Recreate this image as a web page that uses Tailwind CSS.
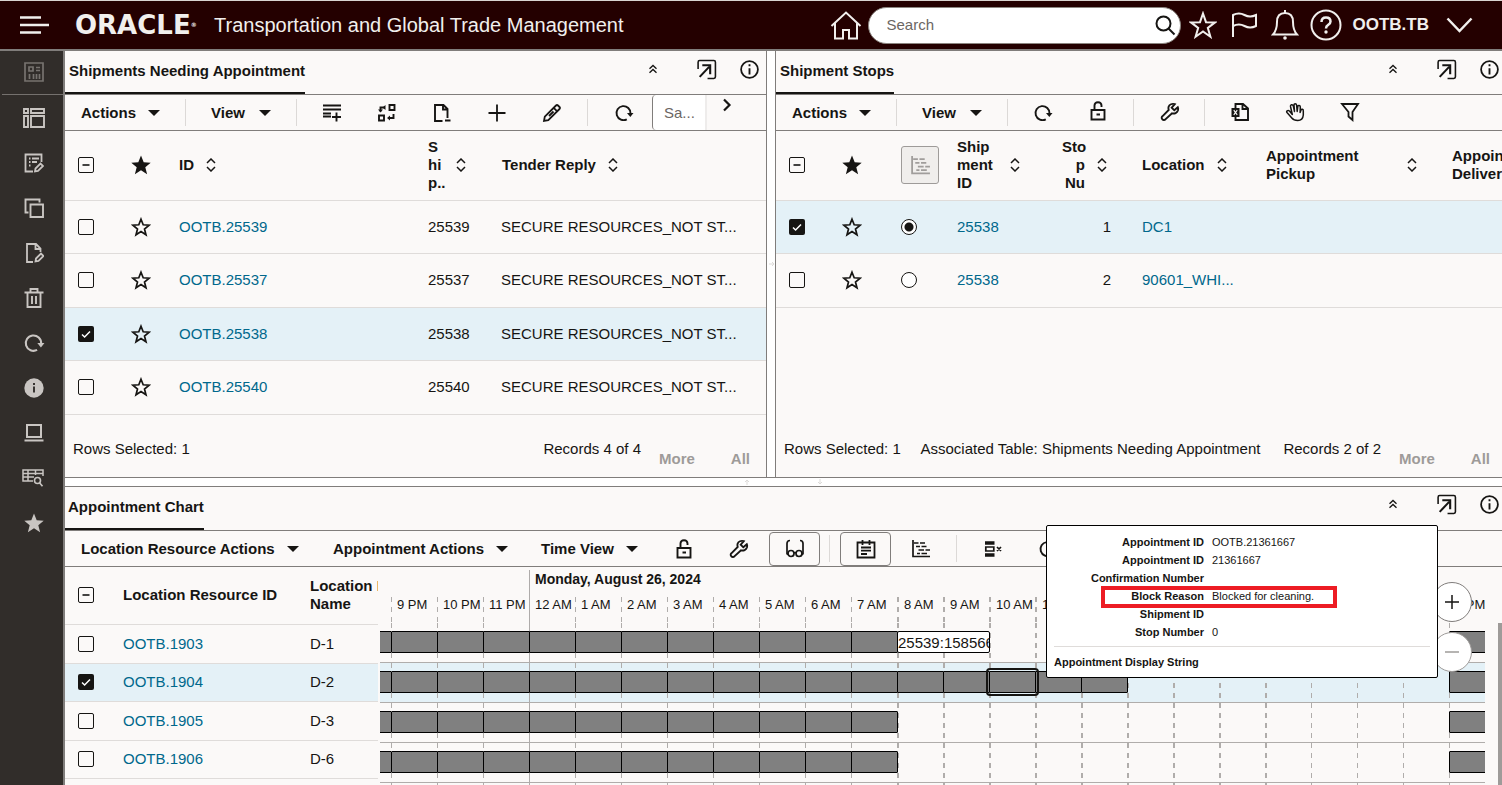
<!DOCTYPE html>
<html lang="en">
<head>
  <meta charset="UTF-8" />
  <meta name="viewport" content="width=device-width, initial-scale=1.0" />
  <title>Transportation and Global Trade Management</title>
  <script src="https://cdn.jsdelivr.net/npm/@tailwindcss/browser@4"></script>
</head>
<body class="h-screen overflow-hidden flex flex-col bg-white text-[#161513] text-[15px] leading-[18px] font-['Liberation_Sans',Arial,sans-serif]">

  <!-- Icon sprite -->
  <svg class="hidden" xmlns="http://www.w3.org/2000/svg">
    <symbol id="caret" viewBox="0 0 12 6"><path d="M0 0h12L6 6z" fill="currentColor"/></symbol>
    <symbol id="sort" viewBox="0 0 10 14"><path d="M1 5l4-4 4 4M1 9l4 4 4-4" fill="none" stroke="currentColor" stroke-width="1.5"/></symbol>
    <symbol id="star" viewBox="0 0 20 20"><path d="M10 2.200l2.200 5.600 5.900.4-4.600 3.800 1.500 5.800-5-3.200-5 3.200 1.500-5.800-4.600-3.800 5.900-.4z" fill="none" stroke="currentColor" stroke-width="1.700"/></symbol>
    <symbol id="star-fill" viewBox="0 0 20 20"><path d="M10 .5l2.7 6.7 7 .5-5.4 4.500 1.800 7-6.100-3.900-6.100 3.900 1.800-7L.3 7.700l7-.5z" fill="currentColor"/></symbol>
    <symbol id="tick" viewBox="0 0 14 14"><path d="M3 7.5l2.6 2.5L11 4.5" fill="none" stroke="#fff" stroke-width="1.5"/></symbol>
    <symbol id="dash" viewBox="0 0 14 14"><path d="M3.5 7h7" fill="none" stroke="#161513" stroke-width="1.6"/></symbol>
    <symbol id="collapse" viewBox="0 0 10 10"><path d="M1.5 4.8L5 1.5l3.5 3.3M1.5 8.8L5 5.5l3.5 3.3" fill="none" stroke="currentColor" stroke-width="1.3"/></symbol>
    <symbol id="popout" viewBox="0 0 20 20"><g fill="none" stroke="currentColor"><path d="M2 9.500V3q0-1.500 1.500-1.500h13.500q1.500 0 1.500 1.500v14q0 1.500-1.500 1.500H11" stroke-width="1.500"/><path d="M3.500 17L12.500 7.500M6 6h7.500v8.500" stroke-width="2"/></g></symbol>
    <symbol id="info" viewBox="0 0 20 20"><circle cx="10" cy="10" r="8" fill="none" stroke="currentColor" stroke-width="1.700"/><path d="M10 8.700v6M10 5v2" stroke="currentColor" stroke-width="1.800"/></symbol>
    <symbol id="rows-add" viewBox="0 0 20 20"><path d="M1 2.500h18M1 6.500h18M1 10.500h8M1 13.500h8M14.500 9.500v9M10 14h9" fill="none" stroke="currentColor" stroke-width="1.900"/></symbol>
    <symbol id="swap" viewBox="0 0 20 20"><g fill="none" stroke="currentColor" stroke-width="1.900"><path d="M12.500 2h5v5h-5zM2 12.500h5v5H2zM3.500 8.500V4.500h4M16.500 11v4h-4"/><path d="M1 6.500h5L3.500 9.500zM8.500 2v5L5.500 4.500zM13 12.500v5L10 15z" fill="currentColor" stroke="none"/></g></symbol>
    <symbol id="doc-minus" viewBox="0 0 20 20"><path d="M10.500 18H3V2h8.500l4 4v9M11 2v4.500h4.500M13 17.500h5.500" fill="none" stroke="currentColor" stroke-width="1.900"/></symbol>
    <symbol id="plus" viewBox="0 0 20 20"><path d="M10 1.500v17M1.500 10h17" fill="none" stroke="currentColor" stroke-width="1.800"/></symbol>
    <symbol id="pencil" viewBox="0 0 20 20"><path d="M2 18l.8-4.300L14 2.500q1-1 2 0L17.500 4q1 1 0 2L6.300 17.200zM11.700 4.800l3.500 3.500M7 13l4.500-4.500" fill="none" stroke="currentColor" stroke-width="1.800"/></symbol>
    <symbol id="refresh" viewBox="0 0 20 20"><path d="M12.800 16.300A7 7 0 1 1 16.500 10.500" fill="none" stroke="currentColor" stroke-width="1.900"/><path d="M13 10h6.500L16.300 14z" fill="currentColor"/></symbol>
    <symbol id="lock" viewBox="0 0 20 20"><path d="M3.500 9h13v9.500h-13zM6.500 9V4.500q0-3.200 3.500-3.200t3.500 3.200V6M8.500 13.500h3.500" fill="none" stroke="currentColor" stroke-width="1.900"/></symbol>
    <symbol id="wrench" viewBox="0 0 20 20"><path d="M17.800 5.200l-3.500 3.100-2.600-2.600 3.100-3.500c-2.500-1-5.500.2-6.300 2.800-.3 1 0 2.200.2 3L2.400 14.300a1.900 1.900 0 0 0 0 3 1.900 1.900 0 0 0 3 0L12 11.300c2.500.8 5.200-.5 6-3 .3-1.100.2-2.200-.2-3.100z" fill="none" stroke="currentColor" stroke-width="1.900"/></symbol>
    <symbol id="excel" viewBox="0 0 20 20"><path d="M5.500 6V2H13l5 4.500V18H5.500v-3M12.500 2v5h5" fill="none" stroke="currentColor" stroke-width="1.900"/><path d="M1.500 6h8v9h-8z" fill="currentColor"/><path d="M3.800 8.200l3.400 4.600M7.200 8.200l-3.400 4.600" stroke="#fbf9f8" stroke-width="1.100"/></symbol>
    <symbol id="hand" viewBox="0 0 20 20"><path d="M7.300 12.500L5.500 4.500Q5.200 3 6.500 2.700T8.300 3.800L9.500 9.500L9 3q0-1.300 1.200-1.300T11.600 3l.6 6.500L12.800 4.500q.2-1.200 1.400-1T15.300 5l-.2 5.500L16 8q.4-1 1.400-.7T18.300 9v4q-.5 5.500-5.500 5.500-4 0-6-2.500L2 10.500q-.8-1 .2-1.700T4.500 9z" fill="none" stroke="currentColor" stroke-width="1.500" stroke-linejoin="round"/></symbol>
    <symbol id="filter" viewBox="0 0 20 20"><path d="M2 2h16l-5.500 8v8l-4-3.500V10z" fill="none" stroke="currentColor" stroke-width="1.800"/></symbol>
    <symbol id="gantt" viewBox="0 0 20 20"><path d="M2 1v16.500h17M3 4h4.500M9 4h5M5 7.500h4M10.500 7.500h5M7.500 11H13M14.500 11H19M6 14.500h3M10.500 14.500h5.500" fill="none" stroke="currentColor" stroke-width="1.700"/></symbol>
    <symbol id="glasses" viewBox="0 0 20 20"><g fill="none" stroke="currentColor" stroke-width="1.700"><circle cx="6" cy="14.500" r="3"/><circle cx="14" cy="14.500" r="3"/><path d="M9 14q1-.8 2 0M2 15.500V4.500q0-3 3-3M18 15.500V4.500q0-3-3-3M2 15.500l1.500-1M18 15.500l-1.500-1"/></g></symbol>
    <symbol id="notes" viewBox="0 0 20 20"><path d="M1.500 3.500h17v15h-17zM6.500 1v5M13.500 1v5M5 8.500h10M5 11.700h10M5 15h6" fill="none" stroke="currentColor" stroke-width="1.800"/></symbol>
    <symbol id="block-x" viewBox="0 0 20 20"><path d="M2 4h9.500M2 16h9.500" stroke="currentColor" stroke-width="3.500"/><path d="M2.800 8h8v4h-8zM14 8l4 4M18 8l-4 4" fill="none" stroke="currentColor" stroke-width="1.700"/></symbol>
    <symbol id="dashboard" viewBox="0 0 20 20"><path d="M1 1h18v18H1zM5 5h4v4H5zM12 5.500h4M12 8.500h4M5.500 12v5M9.500 12v5M12.500 12v5M15.500 12v5" fill="none" stroke="currentColor" stroke-width="1.700"/></symbol>
    <symbol id="layout" viewBox="0 0 22 20"><path d="M1 1h4v4H1zM8 1h13v4H8zM1 8h4v11H1zM8 8h13v11H8z" fill="none" stroke="currentColor" stroke-width="1.900"/></symbol>
    <symbol id="form-edit" viewBox="0 0 20 20"><path d="M9 18.500H1.500v-17h16V9M5 5.500h1.500M8 5.500h7M5 9h1.500M8 9h5M5 12.500h1.500M11 18.500l.5-3 5-5 2.500 2.500-5 5z" fill="none" stroke="currentColor" stroke-width="1.800"/></symbol>
    <symbol id="copy" viewBox="0 0 20 20"><path d="M6.500 6.500h12.500v12.500H6.500zM4.500 14.500H1.500v-13h14v3" fill="none" stroke="currentColor" stroke-width="1.900"/></symbol>
    <symbol id="doc-edit" viewBox="0 0 20 20"><path d="M9 19H3V1h9l4.500 4.500V9M11.500 1v5h5M11.500 18.500l.5-3 5-5 2.500 2.500-5 5z" fill="none" stroke="currentColor" stroke-width="1.800"/></symbol>
    <symbol id="trash" viewBox="0 0 20 20"><path d="M.5 4.500h19M3.500 4.500v14.500h13V4.500M6.500 4.500V1h7v3.500M8 8v8M12 8v8" fill="none" stroke="currentColor" stroke-width="1.900"/></symbol>
    <symbol id="info-fill" viewBox="0 0 20 20"><circle cx="10" cy="10" r="9.700" fill="currentColor"/><path d="M10 8.500v6M10 5v2" stroke="#312d2a" stroke-width="1.900"/></symbol>
    <symbol id="laptop" viewBox="0 0 20 20"><path d="M3 2h14v12H3zM.5 17.500h19" fill="none" stroke="currentColor" stroke-width="2"/></symbol>
    <symbol id="table-search" viewBox="0 0 22 20"><path d="M11 13H1V2h20v6M1 5.500h20M1 9h11M6 2v11M13.500 2v5" fill="none" stroke="currentColor" stroke-width="1.500"/><circle cx="15.500" cy="12.500" r="3" fill="none" stroke="currentColor" stroke-width="1.600"/><path d="M17.500 14.700l3 3.500" stroke="currentColor" stroke-width="1.700"/></symbol>
  </svg>

  <!-- Top bar -->
  <header class="h-[51px] shrink-0 flex items-center bg-[#240000] text-[#f1efed] border-t border-t-[#d9d4d1] border-b-2 border-b-[#807d7b] pl-5 pr-[29px]">
    <button type="button" aria-label="Menu" class="w-[55px]">
      <svg class="w-[29px] h-[18px]" viewBox="0 0 29 18"><path d="M0 1.500h21M0 9h29M0 16.500h21" stroke="currentColor" stroke-width="2.500"/></svg>
    </button>
    <a href="#" class="w-[139px] font-['DejaVu_Sans',sans-serif] font-bold text-[26px]">ORACLE<span class="text-[6px] align-top">®</span></a>
    <h1 class="text-[20px] whitespace-nowrap">Transportation and Global Trade Management</h1>
    <nav class="ml-auto flex items-center">
      <button type="button" aria-label="Home"><svg class="w-[32px] h-[30px]" viewBox="0 0 32 30" fill="none" stroke="currentColor" stroke-width="2"><path d="M1.500 16L16 2.500 30.500 16M5 13v15.500h8V20h6v8.500h8V13"/></svg></button>
      <div class="ml-[6px] flex items-center w-[313px] h-[37px] rounded-full bg-white border border-[#8b8580] pl-[18px] pr-[4px] text-[#161513]">
        <input type="search" placeholder="Search" aria-label="Search" class="flex-1 min-w-0 bg-transparent outline-none placeholder:text-[#6b6663]">
        <button type="button" aria-label="Run search"><svg class="size-[22px]" viewBox="0 0 22 22" fill="none" stroke="currentColor" stroke-width="2"><circle cx="9.500" cy="9.500" r="7"/><path d="M14.500 14.500l6 6"/></svg></button>
      </div>
      <button type="button" aria-label="Favorites" class="ml-[8px]"><svg class="size-[28px]" viewBox="0 0 28 28" fill="none" stroke="currentColor" stroke-width="2"><path d="M14 2.500l3 8.700 9 .2-7.200 5.500 2.600 8.800-7.400-5.200-7.400 5.200 2.600-8.800L2 11.400l9-.2z"/></svg></button>
      <button type="button" aria-label="Flag" class="ml-[14px]"><svg class="w-[27px] h-[26px]" viewBox="0 0 27 26" fill="none" stroke="currentColor" stroke-width="2"><path d="M2 25V3q6-3 11.500 0T25 3v11q-6 3-11.500 0T2 14"/></svg></button>
      <button type="button" aria-label="Notifications" class="ml-[13px]"><svg class="w-[28px] h-[32px]" viewBox="0 0 28 32" fill="none" stroke="currentColor" stroke-width="2"><path d="M14 1v3M14 4q-8 0-8 9 0 8-4 12.500h24Q22 21 22 13q0-9-8-9z"/><circle cx="14" cy="29" r="1.800" fill="currentColor" stroke="none"/></svg></button>
      <button type="button" aria-label="Help" class="ml-[11px]"><svg class="size-[32px]" viewBox="0 0 32 32" fill="none" stroke="currentColor" stroke-width="2"><circle cx="16" cy="16" r="14.500"/><path d="M11.500 13q0-4.500 4.500-4.500t4.500 4q0 2-2.300 3.300Q16 17 16 19.500" stroke-width="2.500"/><circle cx="16" cy="23" r="1.700" fill="currentColor" stroke="none"/></svg></button>
      <button type="button" class="ml-[11px] flex items-center gap-[17px] font-bold text-[17px]">OOTB.TB
        <svg class="w-[27px] h-[16px]" viewBox="0 0 27 16" fill="none" stroke="currentColor" stroke-width="2.500"><path d="M1.500 1.500l12 12.500 12-12.500"/></svg>
      </button>
    </nav>
  </header>

  <div class="flex-1 min-h-0 flex">
    <!-- Side rail -->
    <aside class="w-[65px] shrink-0 flex flex-col bg-[#312d2a] text-[#c9c5c2] border-r-2 border-[#807d7b]">
      <button type="button" aria-label="Dashboard" class="h-[44px] ml-[2px] pl-[3px] pb-[2px] grid place-items-center border-b border-[#75716e] text-[#77736f]"><svg class="size-[20px]"><use href="#dashboard"/></svg></button>
      <button type="button" aria-label="Layout" class="h-[45px] pl-[5px] grid place-items-center"><svg class="w-[22px] h-[20px]"><use href="#layout"/></svg></button>
      <button type="button" aria-label="Edit form" class="h-[45px] pl-[5px] grid place-items-center"><svg class="size-[20px]"><use href="#form-edit"/></svg></button>
      <button type="button" aria-label="Copy" class="h-[45px] pl-[5px] grid place-items-center"><svg class="size-[20px]"><use href="#copy"/></svg></button>
      <button type="button" aria-label="Edit document" class="h-[45px] pl-[5px] grid place-items-center"><svg class="size-[20px]"><use href="#doc-edit"/></svg></button>
      <button type="button" aria-label="Delete" class="h-[45px] pl-[5px] grid place-items-center"><svg class="size-[20px]"><use href="#trash"/></svg></button>
      <button type="button" aria-label="Refresh" class="h-[45px] pl-[5px] grid place-items-center"><svg class="size-[22px]"><use href="#refresh"/></svg></button>
      <button type="button" aria-label="Information" class="h-[45px] pl-[5px] grid place-items-center"><svg class="size-[20px]"><use href="#info-fill"/></svg></button>
      <button type="button" aria-label="Screen" class="h-[45px] pl-[5px] grid place-items-center"><svg class="size-[20px]"><use href="#laptop"/></svg></button>
      <button type="button" aria-label="Search table" class="h-[45px] pl-[3px] grid place-items-center"><svg class="w-[22px] h-[20px]"><use href="#table-search"/></svg></button>
      <button type="button" aria-label="Favorites" class="h-[45px] pl-[5px] grid place-items-center"><svg class="size-[20px]"><use href="#star-fill"/></svg></button>
    </aside>

    <main class="flex-1 min-w-0 flex flex-col">
      <div class="h-[427px] shrink-0 flex border-b border-[#807d7b]">

        <!-- Shipments Needing Appointment -->
        <section class="flex-[702] min-w-0 flex flex-col overflow-hidden bg-[#fbf9f8] border-r border-[#807d7b]">
          <div class="h-[44px] shrink-0 flex items-stretch border-b border-[#807d7b]">
            <h2 class="pl-[4px] pb-[1px] flex items-center font-bold whitespace-nowrap border-b-2 border-[#161513]">Shipments Needing Appointment</h2>
            <div class="ml-auto flex items-center pb-[7px] pr-[6px]">
              <button type="button" aria-label="Collapse"><svg class="size-[10px]"><use href="#collapse"/></svg></button>
              <button type="button" aria-label="Open in window" class="ml-[38px]"><svg class="size-[21px]"><use href="#popout"/></svg></button>
              <button type="button" aria-label="Information" class="ml-[22px]"><svg class="size-[21px]"><use href="#info"/></svg></button>
            </div>
          </div>
          <div class="h-[36px] shrink-0 flex items-center border-b border-[#807d7b]">
            <button type="button" class="w-[120px] pl-4 flex items-center gap-[12px] font-bold">Actions <svg class="w-[12px] h-[6px]"><use href="#caret"/></svg></button>
            <span class="w-px h-[27px] bg-[#dcd9d7]"></span>
            <button type="button" class="w-[110px] pl-[25px] flex items-center gap-[14px] font-bold">View <svg class="w-[12px] h-[6px]"><use href="#caret"/></svg></button>
            <span class="w-px h-[27px] mr-[7px] bg-[#dcd9d7]"></span>
            <button type="button" aria-label="Add rows" class="w-[55px] grid place-items-center"><svg class="size-[20px]"><use href="#rows-add"/></svg></button>
            <button type="button" aria-label="Swap" class="w-[55px] grid place-items-center"><svg class="size-[20px]"><use href="#swap"/></svg></button>
            <button type="button" aria-label="Remove document" class="w-[55px] grid place-items-center"><svg class="size-[20px]"><use href="#doc-minus"/></svg></button>
            <button type="button" aria-label="Add" class="w-[55px] grid place-items-center"><svg class="size-[20px]"><use href="#plus"/></svg></button>
            <button type="button" aria-label="Edit" class="w-[55px] grid place-items-center"><svg class="size-[20px]"><use href="#pencil"/></svg></button>
            <span class="w-px h-[27px] mx-2 bg-[#dcd9d7]"></span>
            <button type="button" aria-label="Refresh" class="w-[55px] grid place-items-center"><svg class="size-[20px]"><use href="#refresh"/></svg></button>
            <input type="text" placeholder="Sa..." aria-label="Saved search" class="w-[55px] h-full ml-px pl-[11px] bg-white border-l border-l-[#807d7b] border-r-2 border-r-[#eeeceb] rounded-l-[4px] placeholder:text-[#6b6663]">
            <button type="button" aria-label="More tools" class="ml-[15px] pb-4"><svg class="w-[10px] h-[14px]" viewBox="0 0 10 14"><path d="M2 1.500L7.500 7 2 12.500" fill="none" stroke="currentColor" stroke-width="2.200"/></svg></button>
          </div>
          <table class="table-fixed w-full">
            <colgroup><col class="w-[42px]"><col class="w-[68px]"><col class="w-[249px]"><col class="w-[74px]"><col></colgroup>
            <thead>
              <tr class="h-[69px] border-b border-[#dfdcda] text-left">
                <th><label class="mx-auto size-[16px] grid"><input type="checkbox" aria-label="Select all shipments" class="appearance-none [grid-area:1/1] size-[16px] border-[1.5px] border-[#161513] rounded-[2px]"><svg class="[grid-area:1/1] size-[14px] m-[1px]"><use href="#dash"/></svg></label></th>
                <th><svg class="mx-auto size-[20px]"><use href="#star-fill"/></svg></th>
                <th class="pl-[4px]"><span class="flex items-center gap-[12px]">ID <svg class="w-[10px] h-[14px]"><use href="#sort"/></svg></span></th>
                <th class="pl-[4px]"><span class="flex items-center gap-[14px]"><span class="w-[14px]">S<br>hi<br>p..</span> <svg class="w-[10px] h-[14px]"><use href="#sort"/></svg></span></th>
                <th class="pl-[4px]"><span class="flex items-center gap-[12px]">Tender Reply <svg class="w-[10px] h-[14px]"><use href="#sort"/></svg></span></th>
              </tr>
            </thead>
            <tbody>
              <tr class="h-[53px] border-b border-[#dfdcda]">
                <td><input type="checkbox" aria-label="Select OOTB.25539" class="block mx-auto appearance-none size-[16px] border-[1.5px] border-[#161513] rounded-[2px]"></td>
                <td><button type="button" aria-label="Favorite" class="block mx-auto"><svg class="size-[20px]"><use href="#star"/></svg></button></td>
                <td class="pl-[4px]"><a href="#" class="text-[#00688c]">OOTB.25539</a></td><td class="pl-[4px]">25539</td><td class="pl-[3px] whitespace-nowrap">SECURE RESOURCES_NOT ST...</td>
              </tr>
              <tr class="h-[54px] border-b border-[#dfdcda]">
                <td><input type="checkbox" aria-label="Select OOTB.25537" class="block mx-auto appearance-none size-[16px] border-[1.5px] border-[#161513] rounded-[2px]"></td>
                <td><button type="button" aria-label="Favorite" class="block mx-auto"><svg class="size-[20px]"><use href="#star"/></svg></button></td>
                <td class="pl-[4px]"><a href="#" class="text-[#00688c]">OOTB.25537</a></td><td class="pl-[4px]">25537</td><td class="pl-[3px] whitespace-nowrap">SECURE RESOURCES_NOT ST...</td>
              </tr>
              <tr class="h-[53px] border-b border-[#dfdcda] bg-[#e4f1f7]">
                <td><label class="mx-auto size-[16px] grid"><input type="checkbox" checked aria-label="Select OOTB.25538" class="appearance-none [grid-area:1/1] size-[16px] bg-[#161513] rounded-[2px]"><svg class="[grid-area:1/1] size-[14px] m-[1px]"><use href="#tick"/></svg></label></td>
                <td><button type="button" aria-label="Favorite" class="block mx-auto"><svg class="size-[20px]"><use href="#star"/></svg></button></td>
                <td class="pl-[4px]"><a href="#" class="text-[#00688c]">OOTB.25538</a></td><td class="pl-[4px]">25538</td><td class="pl-[3px] whitespace-nowrap">SECURE RESOURCES_NOT ST...</td>
              </tr>
              <tr class="h-[54px] border-b border-[#dfdcda]">
                <td><input type="checkbox" aria-label="Select OOTB.25540" class="block mx-auto appearance-none size-[16px] border-[1.5px] border-[#161513] rounded-[2px]"></td>
                <td><button type="button" aria-label="Favorite" class="block mx-auto"><svg class="size-[20px]"><use href="#star"/></svg></button></td>
                <td class="pl-[4px]"><a href="#" class="text-[#00688c]">OOTB.25540</a></td><td class="pl-[4px]">25540</td><td class="pl-[3px] whitespace-nowrap">SECURE RESOURCES_NOT ST...</td>
              </tr>
            </tbody>
          </table>
          <div class="mt-auto flex items-start h-[37px] pl-2 pr-4">
            <span>Rows Selected: 1</span>
            <span class="ml-auto">Records 4 of 4</span>
            <button type="button" disabled class="ml-[18px] pt-[10px] font-bold text-[#9e9b99]">More</button>
            <button type="button" disabled class="ml-9 pt-[10px] font-bold text-[#9e9b99]">All</button>
          </div>
        </section>

        <div class="w-[8px] shrink-0 flex items-center justify-end text-[#dddbd9]">
          <svg class="size-[6px]" viewBox="0 0 6 6"><path d="M0 3h5M3 1l2 2-2 2" fill="none" stroke="currentColor"/></svg>
        </div>

        <!-- Shipment Stops -->
        <section class="flex-[727] min-w-0 flex flex-col overflow-hidden bg-[#fbf9f8] border-l border-[#807d7b]">
          <div class="h-[44px] shrink-0 flex items-stretch border-b border-[#807d7b]">
            <h2 class="pl-[4px] pb-[1px] flex items-center font-bold whitespace-nowrap border-b-2 border-[#161513]">Shipment Stops</h2>
            <div class="ml-auto flex items-center pb-[7px] pr-[2px]">
              <button type="button" aria-label="Collapse"><svg class="size-[10px]"><use href="#collapse"/></svg></button>
              <button type="button" aria-label="Open in window" class="ml-[38px]"><svg class="size-[21px]"><use href="#popout"/></svg></button>
              <button type="button" aria-label="Information" class="ml-[22px]"><svg class="size-[21px]"><use href="#info"/></svg></button>
            </div>
          </div>
          <div class="h-[36px] shrink-0 flex items-center border-b border-[#807d7b]">
            <button type="button" class="w-[120px] pl-4 flex items-center gap-[12px] font-bold">Actions <svg class="w-[12px] h-[6px]"><use href="#caret"/></svg></button>
            <span class="w-px h-[27px] bg-[#dcd9d7]"></span>
            <button type="button" class="w-[110px] pl-[25px] flex items-center gap-[14px] font-bold">View <svg class="w-[12px] h-[6px]"><use href="#caret"/></svg></button>
            <span class="w-px h-[27px] mr-[7px] bg-[#dcd9d7]"></span>
            <button type="button" aria-label="Refresh" class="w-[55px] grid place-items-center"><svg class="size-[20px]"><use href="#refresh"/></svg></button>
            <button type="button" aria-label="Unlock" class="w-[55px] grid place-items-center pb-[3px]"><svg class="size-[20px]"><use href="#lock"/></svg></button>
            <span class="w-px h-[27px] mx-2 bg-[#dcd9d7]"></span>
            <button type="button" aria-label="Settings" class="w-[55px] grid place-items-center pb-[2px]"><svg class="size-[20px]"><use href="#wrench"/></svg></button>
            <span class="w-px h-[27px] mx-[7px] bg-[#dcd9d7]"></span>
            <button type="button" aria-label="Export to Excel" class="w-[55px] grid place-items-center pb-[2px]"><svg class="size-[20px]"><use href="#excel"/></svg></button>
            <button type="button" aria-label="Pan" class="w-[55px] grid place-items-center pb-[2px]"><svg class="size-[20px]"><use href="#hand"/></svg></button>
            <button type="button" aria-label="Filter" class="w-[55px] grid place-items-center pb-[2px]"><svg class="size-[20px]"><use href="#filter"/></svg></button>
          </div>
          <table class="table-fixed w-[812px]">
            <colgroup><col class="w-[42px]"><col class="w-[68px]"><col class="w-[67px]"><col class="w-[105px]"><col class="w-[80px]"><col class="w-[124px]"><col class="w-[186px]"><col></colgroup>
            <thead>
              <tr class="h-[69px] border-b border-[#dfdcda] text-left">
                <th><label class="mx-auto size-[16px] grid"><input type="checkbox" aria-label="Select all stops" class="appearance-none [grid-area:1/1] size-[16px] border-[1.5px] border-[#161513] rounded-[2px]"><svg class="[grid-area:1/1] size-[14px] m-[1px]"><use href="#dash"/></svg></label></th>
                <th><svg class="mx-auto size-[20px]"><use href="#star-fill"/></svg></th>
                <th class="pl-[15px]"><button type="button" disabled aria-label="Show on chart" class="size-[38px] grid place-items-center rounded-[3px] border border-[#9e9b99] bg-[#f0eeec] text-[#a09d9b]"><svg class="size-[21px]"><use href="#gantt"/></svg></button></th>
                <th class="pl-[4px]"><span class="flex items-center gap-[15px]"><span class="w-[38px]">Ship<br>ment<br>ID</span> <svg class="w-[10px] h-[14px]"><use href="#sort"/></svg></span></th>
                <th class="pl-[4px]"><span class="flex items-center gap-[12px]"><span class="w-[23px] text-right">Sto<br>p<br>Nu</span> <svg class="w-[10px] h-[14px]"><use href="#sort"/></svg></span></th>
                <th class="pl-[4px]"><span class="flex items-center gap-[12px]">Location <svg class="w-[10px] h-[14px]"><use href="#sort"/></svg></span></th>
                <th class="pl-[4px] pr-[31px]"><span class="flex items-center justify-between">Appointment<br>Pickup <svg class="w-[10px] h-[14px]"><use href="#sort"/></svg></span></th>
                <th class="pl-[4px]">Appointment<br>Delivery</th>
              </tr>
            </thead>
            <tbody>
              <tr class="h-[53px] border-b border-[#dfdcda] bg-[#e4f1f7]">
                <td><label class="mx-auto size-[16px] grid"><input type="checkbox" checked aria-label="Select stop 1" class="appearance-none [grid-area:1/1] size-[16px] bg-[#161513] rounded-[2px]"><svg class="[grid-area:1/1] size-[14px] m-[1px]"><use href="#tick"/></svg></label></td>
                <td><button type="button" aria-label="Favorite" class="block mx-auto"><svg class="size-[20px]"><use href="#star"/></svg></button></td>
                <td class="pl-[15px]"><input type="radio" name="stop" checked aria-label="Stop 1" class="block appearance-none size-[16px] rounded-full border-[1.5px] border-[#161513] bg-white bg-[radial-gradient(circle,#161513_0_4px,transparent_5px)]"></td>
                <td class="pl-[4px]"><a href="#" class="text-[#00688c]">25538</a></td><td class="pr-[27px] text-right">1</td><td class="pl-[4px]"><a href="#" class="text-[#00688c]">DC1</a></td><td></td><td></td>
              </tr>
              <tr class="h-[54px] border-b border-[#dfdcda]">
                <td><input type="checkbox" aria-label="Select stop 2" class="block mx-auto appearance-none size-[16px] border-[1.5px] border-[#161513] rounded-[2px]"></td>
                <td><button type="button" aria-label="Favorite" class="block mx-auto"><svg class="size-[20px]"><use href="#star"/></svg></button></td>
                <td class="pl-[15px]"><input type="radio" name="stop" aria-label="Stop 2" class="block appearance-none size-[16px] rounded-full border-[1.5px] border-[#161513] bg-white"></td>
                <td class="pl-[4px]"><a href="#" class="text-[#00688c]">25538</a></td><td class="pr-[27px] text-right">2</td><td class="pl-[4px]"><a href="#" class="text-[#00688c]">90601_WHI...</a></td><td></td><td></td>
              </tr>
            </tbody>
          </table>
          <div class="mt-auto flex items-start h-[37px] pl-2 pr-[12px] whitespace-nowrap">
            <span>Rows Selected: 1</span>
            <span class="ml-auto">Associated Table: Shipments Needing Appointment</span>
            <span class="ml-[23px]">Records 2 of 2</span>
            <button type="button" disabled class="ml-[18px] pt-[10px] font-bold text-[#9e9b99]">More</button>
            <button type="button" disabled class="ml-9 pt-[10px] font-bold text-[#9e9b99]">All</button>
          </div>
        </section>
      </div>

      <div class="h-[8px] shrink-0 flex items-center justify-center gap-[67px] text-[#dddbd9]">
        <svg class="size-[6px]" viewBox="0 0 6 6"><path d="M3 6V1M1 3l2-2 2 2" fill="none" stroke="currentColor"/></svg>
        <svg class="size-[6px]" viewBox="0 0 6 6"><path d="M3 0v5M1 3l2 2 2-2" fill="none" stroke="currentColor"/></svg>
      </div>

      <!-- Appointment Chart -->
      <section class="relative flex-1 min-h-0 flex flex-col overflow-hidden bg-[#fbf9f8] border-t border-[#807d7b]">
        <div class="h-[44px] shrink-0 flex items-stretch border-b border-[#807d7b]">
          <h2 class="pl-[3px] pb-[2px] flex items-center font-bold whitespace-nowrap border-b-2 border-[#161513]">Appointment Chart</h2>
          <div class="ml-auto flex items-center pb-[9px] pr-[2px]">
            <button type="button" aria-label="Collapse"><svg class="size-[10px]"><use href="#collapse"/></svg></button>
            <button type="button" aria-label="Open in window" class="ml-[38px]"><svg class="size-[21px]"><use href="#popout"/></svg></button>
            <button type="button" aria-label="Information" class="ml-[22px]"><svg class="size-[21px]"><use href="#info"/></svg></button>
          </div>
        </div>
        <div class="h-[36px] shrink-0 flex items-center border-b border-[#807d7b] whitespace-nowrap">
          <button type="button" class="ml-4 w-[252px] flex items-center gap-[12px] font-bold">Location Resource Actions <svg class="w-[12px] h-[6px]"><use href="#caret"/></svg></button>
          <button type="button" class="w-[208px] flex items-center gap-[12px] font-bold">Appointment Actions <svg class="w-[12px] h-[6px]"><use href="#caret"/></svg></button>
          <button type="button" class="w-[115px] flex items-center gap-[12px] font-bold">Time View <svg class="w-[12px] h-[6px]"><use href="#caret"/></svg></button>
          <button type="button" aria-label="Unlock" class="w-[55px] grid place-items-center"><svg class="size-[20px]"><use href="#lock"/></svg></button>
          <button type="button" aria-label="Settings" class="w-[55px] grid place-items-center"><svg class="size-[20px]"><use href="#wrench"/></svg></button>
          <button type="button" aria-label="View details" class="ml-[3px] w-[51px] h-[34px] grid place-items-center rounded-[4px] border border-[#807d7b]"><svg class="size-[20px]"><use href="#glasses"/></svg></button>
          <span class="w-px h-[27px] ml-[9px] mr-[10px] bg-[#dcd9d7]"></span>
          <button type="button" aria-label="Notes" class="w-[51px] h-[34px] grid place-items-center rounded-[4px] border border-[#807d7b]"><svg class="size-[20px]"><use href="#notes"/></svg></button>
          <button type="button" aria-label="Gantt" class="ml-[2px] w-[55px] grid place-items-center"><svg class="size-[20px]"><use href="#gantt"/></svg></button>
          <span class="w-px h-[27px] mx-2 bg-[#dcd9d7]"></span>
          <button type="button" aria-label="Remove block" class="w-[55px] grid place-items-center"><svg class="size-[20px]"><use href="#block-x"/></svg></button>
          <button type="button" aria-label="Refresh" class="w-[55px] grid place-items-center"><svg class="size-[20px]"><use href="#refresh"/></svg></button>
        </div>

        <div class="flex-1 min-h-0 flex items-start">
          <table class="table-fixed w-[313px] shrink-0 mr-[2px]">
            <colgroup><col class="w-[42px]"><col class="w-[199px]"><col></colgroup>
            <thead>
              <tr class="h-[57px] border-b border-[#dfdcda] text-left whitespace-nowrap">
                <th><label class="mx-auto size-[16px] grid"><input type="checkbox" aria-label="Select all resources" class="appearance-none [grid-area:1/1] size-[16px] border-[1.5px] border-[#161513] rounded-[2px]"><svg class="[grid-area:1/1] size-[14px] m-[1px]"><use href="#dash"/></svg></label></th>
                <th class="pl-4">Location Resource ID</th>
                <th class="pl-[4px] overflow-hidden">Location I<br>Name</th>
              </tr>
            </thead>
            <tbody>
              <tr class="h-[39px] border-b border-[#dfdcda]">
                <td><input type="checkbox" aria-label="Select OOTB.1903" class="block mx-auto appearance-none size-[16px] border-[1.5px] border-[#161513] rounded-[2px]"></td>
                <td class="pl-4"><a href="#" class="text-[#00688c]">OOTB.1903</a></td><td class="pl-[4px]">D-1</td>
              </tr>
              <tr class="h-[38px] border-b border-[#dfdcda] bg-[#e4f1f7]">
                <td><label class="mx-auto size-[16px] grid"><input type="checkbox" checked aria-label="Select OOTB.1904" class="appearance-none [grid-area:1/1] size-[16px] bg-[#161513] rounded-[2px]"><svg class="[grid-area:1/1] size-[14px] m-[1px]"><use href="#tick"/></svg></label></td>
                <td class="pl-4"><a href="#" class="text-[#00688c]">OOTB.1904</a></td><td class="pl-[4px]">D-2</td>
              </tr>
              <tr class="h-[39px] border-b border-[#dfdcda]">
                <td><input type="checkbox" aria-label="Select OOTB.1905" class="block mx-auto appearance-none size-[16px] border-[1.5px] border-[#161513] rounded-[2px]"></td>
                <td class="pl-4"><a href="#" class="text-[#00688c]">OOTB.1905</a></td><td class="pl-[4px]">D-3</td>
              </tr>
              <tr class="h-[38px] border-b border-[#dfdcda]">
                <td><input type="checkbox" aria-label="Select OOTB.1906" class="block mx-auto appearance-none size-[16px] border-[1.5px] border-[#161513] rounded-[2px]"></td>
                <td class="pl-4"><a href="#" class="text-[#00688c]">OOTB.1906</a></td><td class="pl-[4px]">D-6</td>
              </tr>
            </tbody>
          </table>

          <!-- Timeline: one column per hour, 46px each -->
          <div class="flex-1 min-w-0 self-stretch flex flex-col overflow-hidden">
            <div class="h-[30px] shrink-0 pt-[3px] flex">
              <div class="ml-[149px] h-full pl-[5px] border-l border-[#aeabaa] text-[14px] font-bold">Monday, August 26, 2024</div>
            </div>
            <div id="hours" class="h-[26px] shrink-0 flex pl-[11px] text-[13px] leading-[15px] whitespace-nowrap"></div>
            <div class="relative flex-1">
              <div id="rows"></div>
              <div id="grid" class="absolute inset-0 flex pl-[11px] overflow-hidden"></div>
            </div>
          </div>

          <div class="w-[17px] shrink-0 self-stretch pt-[56px] flex justify-end">
            <div class="w-[4px] bg-[#9e9b99]"></div>
          </div>
        </div>

        <!-- Zoom controls -->
        <div class="absolute z-20 right-[30px] top-[95px] flex flex-col gap-[10px]">
          <button type="button" aria-label="Zoom in" class="size-[40px] grid place-items-center rounded-full bg-white border border-[#807d7b]"><svg class="size-[14px]" viewBox="0 0 14 14"><path d="M7 0v14M0 7h14" stroke="#161513" stroke-width="1.500"/></svg></button>
          <button type="button" disabled aria-label="Zoom out" class="size-[40px] grid place-items-center rounded-full bg-white border border-[#9e9b99]"><svg class="size-[14px]" viewBox="0 0 14 14"><path d="M0 7h14" stroke="#9e9b99" stroke-width="1.500"/></svg></button>
        </div>

        <!-- Appointment details -->
        <div role="tooltip" class="absolute z-30 right-[64px] top-[38px] w-[392px] h-[153px] pt-[7px] px-[7px] bg-white border border-black rounded-[2px] text-[11px] leading-[18px]">
          <dl class="grid grid-cols-[150px_1fr] auto-rows-[18px] gap-x-2">
            <dt class="font-bold text-right">Appointment ID</dt><dd>OOTB.21361667</dd>
            <dt class="font-bold text-right">Appointment ID</dt><dd>21361667</dd>
            <dt class="font-bold text-right">Confirmation Number</dt><dd></dd>
            <dt class="relative font-bold text-right">Block Reason<span class="absolute left-[47px] top-[-1px] w-[236px] h-[22px] border-4 border-[#ed1c24]"></span></dt><dd>Blocked for cleaning.</dd>
            <dt class="font-bold text-right">Shipment ID</dt><dd></dd>
            <dt class="font-bold text-right">Stop Number</dt><dd>0</dd>
          </dl>
          <div class="mt-[5px] pt-[6px] border-t border-[#dfdcda] font-bold">Appointment Display String</div>
        </div>
      </section>
    </main>
  </div>

  <script>
    const hours = ["9 PM", "10 PM", "11 PM", "12 AM", "1 AM", "2 AM", "3 AM", "4 AM", "5 AM", "6 AM", "7 AM", "8 AM",
      "9 AM", "10 AM", "11 AM", "12 PM", "1 PM", "2 PM", "3 PM", "4 PM", "5 PM", "6 PM", "7 PM", "8 PM"];

    // Midnight gets a solid line, the working day gets the heavier dashes
    function line(i) {
      if (i === 3) return "w-px bg-[#aeabaa]";
      if (i > 10 && i < 20) return "w-[2px] bg-[repeating-linear-gradient(to_bottom,#b0adab_0_5px,transparent_5px_10px)]";
      return "w-px bg-[repeating-linear-gradient(to_bottom,#b0adab_0_5px,transparent_5px_10px)]";
    }

    document.getElementById("hours").innerHTML = hours.map((h, i) =>
      `<div class="w-[46px] shrink-0 flex gap-[5px]"><span class="shrink-0 ${line(i)}"></span>${h}</div>`).join("");
    document.getElementById("grid").innerHTML = hours.map((h, i) =>
      `<div class="w-[46px] shrink-0 flex"><span class="${line(i)}"></span></div>`).join("");

    // blocked: hours blocked from 9 PM on; booked: two-hour appointment text; current: highlighted hour
    const resources = [
      { blocked: 11, booked: "25539:158566" },
      { blocked: 16, current: 13, selected: true },
      { blocked: 11 },
      { blocked: 11 },
    ];

    document.getElementById("rows").innerHTML = resources.map((r) => {
      let bars = `<div class="w-[11px] shrink-0 bg-[#808080] border-y border-black"></div>`;
      for (let i = 0; i < 24; i++) {
        if (r.booked && i === 11) {
          bars += `<div class="w-[93px] -mr-px shrink-0 overflow-hidden bg-white border border-black rounded-[2px] leading-[21px]">${r.booked}</div>`;
          i++;
        } else if (i === r.current) {
          bars += `<div class="w-[47px] -mr-px shrink-0 bg-[#808080] border border-black rounded-[1px] outline-2 outline-offset-1 outline-[#161513] z-10"></div>`;
        } else if (i < r.blocked || i === 23) {
          bars += `<div class="w-[47px] -mr-px shrink-0 bg-[#808080] border border-black rounded-[1px]"></div>`;
        } else {
          bars += `<div class="w-[46px] shrink-0"></div>`;
        }
      }
      const tint = r.selected ? "bg-[#e4f1f7]" : "";
      return `<div class="h-[40px] pt-[8px] border-b border-[#b0adab] ${tint}"><div class="relative z-10 h-[22px] flex">${bars}</div></div>`;
    }).join("");
  </script>
</body>
</html>
